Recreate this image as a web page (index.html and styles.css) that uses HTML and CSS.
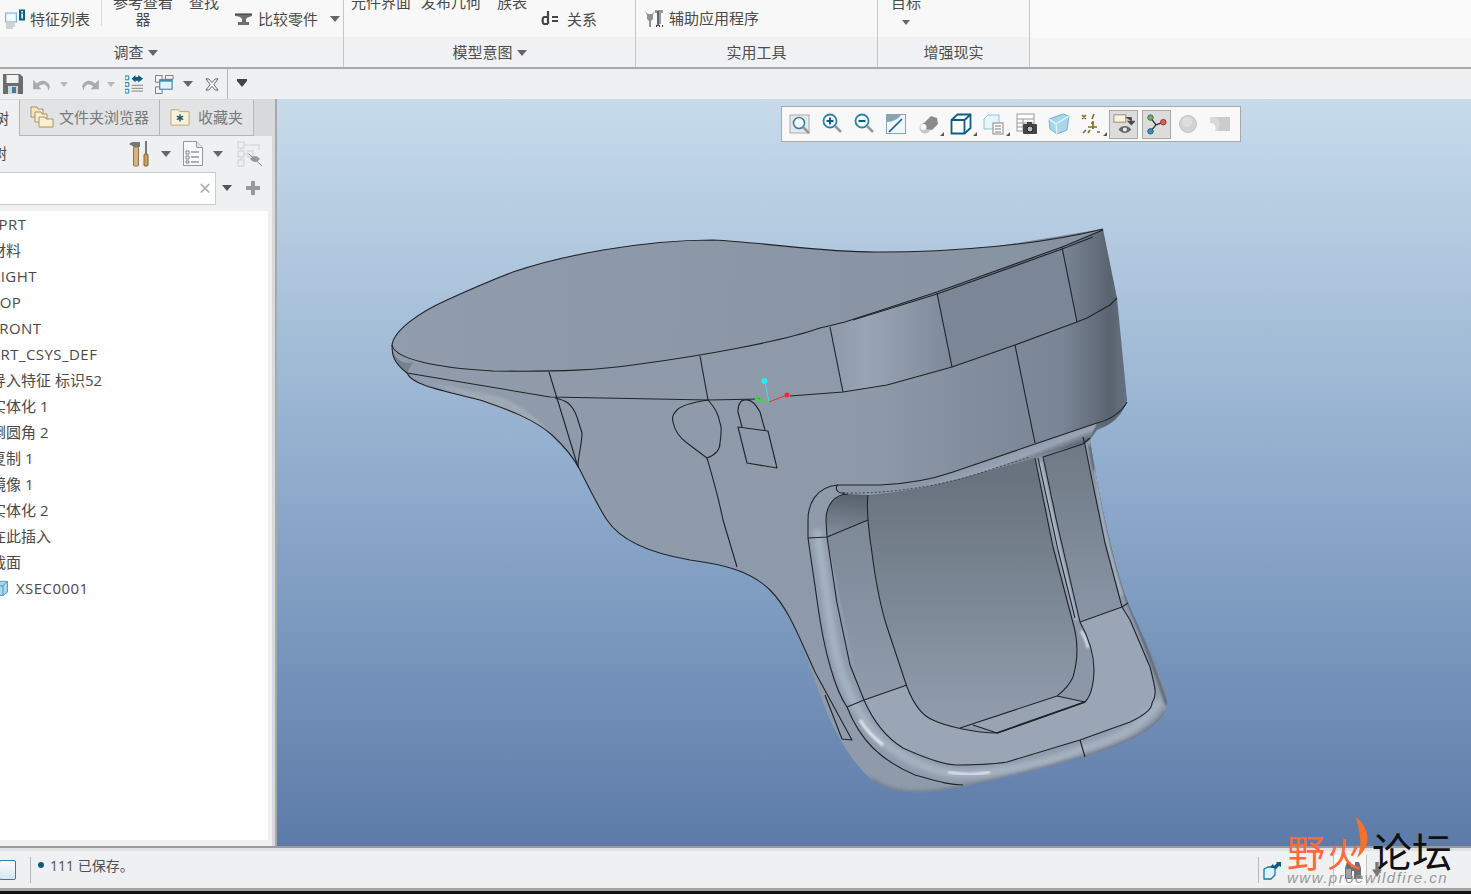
FILE: index.html
```html
<!DOCTYPE html>
<html lang="zh-CN">
<head>
<meta charset="utf-8">
<title>Creo Parametric</title>
<link rel="stylesheet" href="styles.css">
</head>
<body>
<div class="app">
  <header class="ribbon">
    <section class="group g1">
      <div class="tools">
        <span class="tool first">
          <svg class="ic20" viewBox="0 0 20 20"><rect x="0.5" y="4" width="11" height="9" fill="#d8eef8" stroke="#7fb6d2"/><rect x="2" y="5.5" width="8" height="6" fill="#f4fbff"/><rect x="14" y="0.5" width="6" height="11" fill="#0d5f85"/><rect x="16.3" y="2" width="1.6" height="1.6" fill="#fff"/><rect x="16.3" y="4.5" width="1.6" height="5" fill="#fff"/><path d="M1 15h9M1 17h9M1 19h7" stroke="#aaa"/></svg>
          <span>特征列表</span>
        </span>
        <i class="vsep"></i>
        <span class="tool stack s1">参考查看器</span>
        <span class="tool stack s2">查找</span>
        <span class="tool cmp">
          <svg class="ic18" viewBox="0 0 18 18"><path d="M0 4h17v2c-2 1-5 1-6 3v3h3v3H3v-3h4V9C6 7 3 6 0 6z" fill="#6e6e6e"/><path d="M0 4h17" stroke="#333"/></svg>
          <span>比较零件</span><b class="caret cmp-caret"></b>
        </span>
      </div>
      <div class="label">调查<b class="caret"></b></div>
    </section>
    <section class="group g2">
      <div class="tools">
        <span class="tool stack s3">元件界面</span>
        <span class="tool stack s4">发布几何</span>
        <span class="tool stack s5">族表</span>
        <span class="tool rel">
          <svg class="ic18" viewBox="0 0 18 18"><path d="M7 1v13M7 14H3.500C1 14 1 7 3.500 7H7" fill="none" stroke="#444" stroke-width="2.200"/><path d="M11 7h6M11 11h6" stroke="#444" stroke-width="2"/></svg>
          <span>关系</span>
        </span>
      </div>
      <div class="label">模型意图<b class="caret"></b></div>
    </section>
    <section class="group g3">
      <div class="tools">
        <span class="tool aux">
          <svg class="ic20" viewBox="0 0 20 20"><path d="M1 3l2 4v4l2 2v6h2v-6l2-2V7l2-4-3 3H4z" fill="#8c9396"/><path d="M11 2h8v3h-2v11h-3V5h-3z" fill="#9a9a9a"/><path d="M13 3h2v15h-2z" fill="#666"/><path d="M12 18h1M15 18h1M18 18h1" stroke="#333" stroke-width="2"/></svg>
          <span>辅助应用程序</span>
        </span>
      </div>
      <div class="label">实用工具</div>
    </section>
    <section class="group g4">
      <div class="tools">
        <span class="tool target">目标<b class="caret target-caret"></b></span>
      </div>
      <div class="label">增强现实</div>
    </section>
    <section class="group g5">
      <div class="tools"></div>
      <div class="label"></div>
    </section>
  </header>

  <nav class="quick">
    <svg class="q-save" viewBox="0 0 20 20"><path d="M0 0h17l3 3v17H0z" fill="#6c6c6c"/><rect x="3.500" y="1" width="12" height="8" fill="#f2f2f2"/><rect x="5" y="12" width="10" height="8" fill="#cfd5d8"/><rect x="9" y="13" width="4" height="6" fill="#3d7ea0"/></svg>
    <svg class="q-undo" viewBox="0 0 20 16"><path d="M4 7c4-5 12-4 14 3l-2 5c0-7-5-9-10-5l3 3H0V3z" fill="#a9acae"/></svg>
    <b class="caret light q-c1"></b>
    <svg class="q-redo" viewBox="0 0 20 16"><path d="M16 7C12 2 4 3 2 10l2 5c0-7 5-9 10-5l-3 3h9V3z" fill="#a9acae"/></svg>
    <b class="caret light q-c2"></b>
    <svg class="q-regen" viewBox="0 0 20 20"><path d="M0 1h4v4H0zM0 8h4v4H0zM0 15h4v4H0z" fill="#dff1fb" stroke="#1b7aa6"/><path d="M7 11h12M7 14h12M7 17h12" stroke="#999" stroke-width="1.300"/><path d="M7 4l4-4v2h3V0l5 4-5 4V6h-3v2z" fill="#0e5c82"/></svg>
    <svg class="q-win" viewBox="0 0 20 20"><path d="M0.500 0.500h7v7h-7zM0.500 12.500h7v7h-7zM11 0.500h8v4h-8z" fill="#f3f3f3" stroke="#777"/><rect x="5" y="5" width="13" height="10" fill="#e3f3fb" stroke="#3f89ac" stroke-width="1.200"/><rect x="5" y="5" width="13" height="2" fill="#3f89ac"/></svg>
    <b class="caret q-c3"></b>
    <svg class="q-close" viewBox="0 0 15 14"><path d="M1 1h3l3.500 4L11 1h3l-4.500 6L14 13h-3L7.500 9 4 13H1l4.500-6z" fill="#fafafa" stroke="#555"/></svg>
    <i class="q-sep"></i>
    <b class="caret over q-c4"></b>
  </nav>

  <main class="work">
    <aside class="panel">
      <div class="tabs">
        <div class="tab active"><span>模型树</span></div>
        <div class="tab files">
          <svg class="ic24" viewBox="0 0 24 24"><path d="M1 2h6l1 2h5v8H1z" fill="#f6e6bf" stroke="#a89468"/><path d="M5 7h6l1 2h5v8H5z" fill="#f9edcf" stroke="#a89468"/><path d="M9 12h6l1 2h7v8H9z" fill="#fbf0d2" stroke="#a89468"/></svg>
          <span>文件夹浏览器</span>
        </div>
        <div class="tab favs">
          <svg class="ic20f" viewBox="0 0 22 20"><path d="M1 2h8l2 2h10v15H1z" fill="#fbf1d6" stroke="#b9a370"/><path d="M11 7v8M7.500 9l7 4M14.500 9l-7 4" stroke="#0e5c82" stroke-width="1.600"/></svg>
          <span>收藏夹</span>
        </div>
      </div>
      <div class="side">
        <div class="tree-bar">
          <span class="tree-title">模型树</span>
          <svg class="tb-tools" viewBox="0 0 22 26"><path d="M0 3l3-2h8v5H5z" fill="#777"/><rect x="4.500" y="6" width="5" height="19" rx="1" fill="#d6b57a" stroke="#8c7443"/><rect x="16" y="0" width="2" height="13" fill="#777"/><rect x="15" y="13" width="4" height="12" rx="1" fill="#c9a25e" stroke="#7b6232"/></svg>
          <b class="caret tb-c1"></b>
          <svg class="tb-list" viewBox="0 0 20 25"><path d="M0.500 0.500h13l6 6v18H0.500z" fill="#f6f8f9" stroke="#8d9aa3"/><path d="M13.500 0.500v6h6" fill="#dfe5e8" stroke="#8d9aa3"/><path d="M3 10h3v3H3zM3 15h3v3H3zM3 20h3v2H3z" fill="#fff" stroke="#666" stroke-width=".8"/><path d="M8 11h8M8 16h8M8 21h8" stroke="#666" stroke-width="1.200"/></svg>
          <b class="caret tb-c2"></b>
          <svg class="tb-hide" viewBox="0 0 26 26"><path d="M1 1h6v6H1zM1 10h6v6H1zM1 19h6v6H1zM11 10h5v6h-5zM7 4h15v5M7 13h4M4 7v3M4 16v3" fill="none" stroke="#d8dadc" stroke-width="1.500"/><path d="M13 18c3-4 7-4 10 0-3 4-7 4-10 0z" fill="#9a9d9f"/><path d="M12 13l13 12" stroke="#888"/></svg>
        </div>
        <div class="search-row">
          <div class="search"><span class="x">×</span></div>
          <b class="caret sr-c"></b>
          <span class="plus"></span>
        </div>
        <ul class="tree">
          <li class="root latin">111.PRT</li>
          <li>材料</li>
          <li class="latin">RIGHT</li>
          <li class="latin">TOP</li>
          <li class="latin">FRONT</li>
          <li class="latin">PRT_CSYS_DEF</li>
          <li>导入特征 标识52</li>
          <li>实体化 1</li>
          <li>倒圆角 2</li>
          <li>复制 1</li>
          <li>镜像 1</li>
          <li>实体化 2</li>
          <li>在此插入</li>
          <li>截面</li>
          <li class="xsec">
            <svg class="cube" viewBox="0 0 18 18"><path d="M0 6l5-5h9v12l-5 4H0z" fill="#a9d9ee" stroke="#3f8fb3"/><path d="M0 6h9l5-5M9 6v11" fill="none" stroke="#3f8fb3"/></svg>
            <span class="latin">XSEC0001</span>
          </li>
        </ul>
      </div>
    </aside>

    <section class="canvas">
      <svg class="model" viewBox="277 99 1194 747" preserveAspectRatio="none">
        <defs>
          <linearGradient id="gBody" gradientUnits="userSpaceOnUse" x1="392" y1="0" x2="1128" y2="0"><stop offset="0" stop-color="#909cac"/><stop offset=".65" stop-color="#8e9aaa"/><stop offset=".826" stop-color="#7f8b9a"/><stop offset=".91" stop-color="#7a8695"/><stop offset=".955" stop-color="#656f7d"/><stop offset=".976" stop-color="#59636f"/><stop offset="1" stop-color="#687382"/></linearGradient>
          <linearGradient id="gTop" gradientUnits="userSpaceOnUse" x1="392" y1="260" x2="1103" y2="300"><stop offset="0" stop-color="#919dac"/><stop offset=".6" stop-color="#8a96a5"/><stop offset="1" stop-color="#8592a0"/></linearGradient>
          <linearGradient id="gBand1" gradientUnits="userSpaceOnUse" x1="830" y1="0" x2="950" y2="0"><stop offset="0" stop-color="#8e9aaa"/><stop offset=".3" stop-color="#99a5b5"/><stop offset=".7" stop-color="#8a96a5"/><stop offset="1" stop-color="#7e8a99"/></linearGradient>
          <linearGradient id="gBack" gradientUnits="userSpaceOnUse" x1="0" y1="480" x2="0" y2="730"><stop offset="0" stop-color="#69737f"/><stop offset="1" stop-color="#929eae"/></linearGradient>
          <linearGradient id="gWallR" gradientUnits="userSpaceOnUse" x1="0" y1="445" x2="0" y2="622"><stop offset="0" stop-color="#6f7985"/><stop offset="1" stop-color="#8a96a6"/></linearGradient>
          <linearGradient id="gWallL" gradientUnits="userSpaceOnUse" x1="0" y1="520" x2="0" y2="700"><stop offset="0" stop-color="#7d8997"/><stop offset="1" stop-color="#8f9bab"/></linearGradient>
          <linearGradient id="gCorner" gradientUnits="userSpaceOnUse" x1="850" y1="495" x2="845" y2="535"><stop offset="0" stop-color="#59626d"/><stop offset="1" stop-color="#7f8b99"/></linearGradient>
          <linearGradient id="gBrim" gradientUnits="userSpaceOnUse" x1="960" y1="468" x2="967" y2="486"><stop offset="0" stop-color="#8a96a5"/><stop offset=".6" stop-color="#99a5b5"/><stop offset="1" stop-color="#626c78"/></linearGradient>
          <filter id="soft" x="-20%" y="-20%" width="140%" height="140%"><feGaussianBlur stdDeviation="2.500"/></filter>
          <filter id="softer" x="-20%" y="-20%" width="140%" height="140%"><feGaussianBlur stdDeviation="1.200"/></filter>
          <clipPath id="clipS"><path d="M392 345C392 355 393 362 407 373C412 385 440 390 480 400C510 410 535 420 552 435C565 447 575 460 580 470C590 490 600 510 607 520C620 540 650 553 690 560C720 564 750 570 770 590C790 610 800 640 815 680C828 720 845 755 870 778C885 790 905 793 925 792C960 789 1020 775 1083 757C1120 745 1150 735 1165 712C1170 700 1165 690 1157 667C1145 640 1135 620 1127 600C1112 560 1098 490 1090 440L1097 430C1110 425 1122 418 1127 400L1117 298L1103 229Z"/></clipPath>
        </defs>

        <path fill="url(#gBody)" d="M392 345C392 355 393 362 407 373C412 385 440 390 480 400C510 410 535 420 552 435C565 447 575 460 580 470C590 490 600 510 607 520C620 540 650 553 690 560C720 564 750 570 770 590C790 610 800 640 815 680C828 720 845 755 870 778C885 790 905 793 925 792C960 789 1020 775 1083 757C1120 745 1150 735 1165 712C1170 700 1165 690 1157 667C1145 640 1135 620 1127 600C1112 560 1098 490 1090 440L1097 430C1110 425 1122 418 1127 400L1117 298L1103 229Z"/>
        <path fill="#8f9bab" d="M815 680C828 720 845 755 870 778C885 790 905 793 925 792C960 789 1020 775 1083 757C1120 745 1150 735 1165 712C1170 700 1165 690 1157 667C1145 640 1135 620 1127 600C1112 560 1098 490 1090 440L1083 445L1040 500L900 600Z"/>

        <path fill="url(#gBand1)" d="M830 327L937 293L952 367L887 385L843 392Z"/>
        <path fill="#7b8796" d="M937 293L1062 247L1077 322L1015 345L952 367Z"/>
        <path fill="url(#gTop)" d="M392 345C394 330 420 312 447 300C480 285 500 277 513 272C560 256 640 240 713 240C770 243 830 253 880 252C950 252 1040 245 1103 229L1062 247L937 292L830 327C780 342 700 356 640 364C600 370 560 372 493 371C440 368 395 360 392 345Z"/>

        <path fill="#76818f" d="M393 350C395 360 405 365 413 362L407 373C397 367 393 360 393 350Z"/>
        <path fill="#a4adb9" opacity=".8" filter="url(#softer)" d="M432 383L500 397C520 405 535 415 552 435L540 426C505 410 470 398 432 383Z"/>

        <path fill="#8f9bab" d="M808 520C808 505 815 490 838 485L890 485L868 495L848 600L907 687L864 700L848 707L818 607Z"/>
        <path fill="url(#gBrim)" d="M837 485C860 487 905 488 953 472L1035 444L1097 423L1090 438L1083 444L1030 457L980 473C920 490 880 494 843 493Z"/>
        <path fill="url(#gBack)" d="M868 495C920 490 950 482 980 473L1035 458L1053 547L1073 623C1078 640 1078 660 1073 677C1068 688 1062 692 1057 696L960 728C945 726 940 722 933 720C920 715 912 700 907 687L887 627C880 605 876 585 872 553C870 540 866 510 868 495Z"/>
        <path fill="url(#gWallR)" d="M1043 457L1085 445L1105 543L1122 607L1080 622L1057 523Z"/>
        <path fill="#8c98a8" d="M1035 458L1043 457L1057 523L1080 622C1090 640 1094 655 1094 670C1094 680 1092 695 1085 702L1057 696C1062 692 1068 688 1073 677C1078 660 1078 640 1073 623L1053 547Z"/>
        <path fill="url(#gWallL)" d="M827 537L868 520L872 553C876 585 880 605 887 627L907 685L864 700L850 645Z"/>
        <path fill="url(#gCorner)" d="M826 520C827 505 835 495 848 494L868 495L867 507L868 520L827 537Z"/>
        <path fill="#9aa6b6" d="M864 700L907 686C912 700 920 715 933 720C945 726 975 733 997 733L1085 702C1092 695 1094 680 1094 670C1094 655 1090 640 1080 622L1122 607L1130 620L1150 667C1156 690 1157 695 1152 703C1152 708 1145 715 1130 722L1080 740L1007 762C990 765 975 765 957 765C945 765 925 758 903 748C890 740 875 725 864 700Z"/>
        <path fill="#98a4b4" d="M973 725L1057 696L1085 702L997 733Z"/>

        <g clip-path="url(#clipS)">
          <path fill="none" stroke="#a6b2c2" stroke-width="9" filter="url(#soft)" d="M817 530L833 640C840 680 858 718 883 742C908 762 932 772 960 774C1000 774 1050 762 1083 749C1120 738 1145 725 1160 700"/>
          <path fill="none" stroke="#556070" stroke-width="4" filter="url(#soft)" d="M870 780C885 792 905 795 925 794C960 791 1020 777 1083 759C1120 747 1150 737 1167 712"/>
          <path fill="none" stroke="#5a6572" stroke-width="3" filter="url(#softer)" d="M1090 445C1097 490 1112 560 1128 602C1140 630 1155 670 1167 705"/>
          <path fill="none" stroke="#f1f5fa" stroke-width="3" opacity=".85" filter="url(#softer)" d="M860 720C866 730 874 738 883 745"/>
          <path fill="none" stroke="#f1f5fa" stroke-width="2.500" opacity=".85" filter="url(#softer)" d="M948 772C962 775 978 775 990 772"/>
          <path fill="none" stroke="#f1f5fa" stroke-width="2.500" opacity=".85" filter="url(#softer)" d="M1081 631C1085 637 1087 642 1088 648"/>
          <path fill="none" stroke="#b3bfce" stroke-width="3" filter="url(#softer)" d="M1040 462L1058 545L1076 620"/>
          <path fill="none" stroke="#a8b4c3" stroke-width="3" filter="url(#softer)" d="M1095 470C1100 510 1108 550 1122 596"/>
        </g>

        <g class="edges">
          <path d="M392 345C394 330 420 312 447 300C480 285 500 277 513 272C560 256 640 240 713 240C770 243 830 253 880 252C950 252 1040 245 1103 229"/>
          <path d="M392 345C395 360 440 368 493 371C560 372 600 370 640 364C700 356 780 342 820 328L845 322L937 292L1062 247L1103 230"/>
          <path d="M853 320L937 294L1062 249L1093 237"/>
          <path d="M392 345C392 355 393 362 407 373C412 385 440 390 480 400C510 410 535 420 552 435C565 447 575 460 580 470C590 490 600 510 607 520C620 540 650 553 690 560C720 564 750 570 770 590C790 610 800 640 815 672"/>
          <path d="M407 373L550 397L708 400L760 399M790 396L843 392L887 385L952 367L1015 345L1077 322L1087 318L1110 305L1117 298"/>
          <path d="M549 372L578 467M700 356L708 400M830 327L843 392M937 293L952 367M1062 247L1077 322M1015 345L1035 443"/>
          <path d="M555 398C565 400 572 403 577 417L582 433C582 445 578 455 578 467"/>
          <path d="M708 400C695 402 682 405 677 410C672 415 672 418 673 422C675 432 680 438 687 443L707 458C715 455 720 450 720 443C722 430 721 425 720 423C718 412 714 407 708 400Z"/>
          <path d="M707 458C712 475 718 495 723 520L737 567"/>
          <path d="M742 427L738 412C738 405 740 400 745 400C752 399 756 405 760 412L765 430"/>
          <path d="M738 427L768 431L777 468L747 463Z"/>
          <path d="M837 485L880 485C905 484 930 480 953 472L1035 444L1097 423C1110 420 1122 412 1127 402"/>
          <path d="M843 493C870 494 930 490 980 473L1030 457" stroke-dasharray="2 2" opacity=".6"/>
          <path d="M1043 457L1083 444L1090 438M1083 437L1085 445"/>
          <path d="M837 485C835 490 838 494 845 493"/>
          <path d="M838 485C815 487 808 505 808 520L808 538L818 607C824 650 835 690 847 707C860 740 880 760 915 775C940 782 950 785 963 785"/>
          <path d="M848 494C835 494 826 505 826 520L827 537L837 603L850 665L864 700C875 725 890 740 903 748C925 758 945 765 957 765C975 765 990 765 1007 762L1080 740L1130 722C1145 715 1152 708 1152 703C1157 695 1156 690 1150 667L1130 620L1122 607L1105 543L1090 470L1085 445"/>
          <path d="M868 495C866 510 870 540 872 553C876 585 880 605 887 627L907 687C912 700 920 715 933 720C945 726 975 733 997 733L1085 702C1092 695 1094 680 1094 670C1094 655 1090 640 1080 622L1057 523L1043 457"/>
          <path d="M1035 458L1053 547L1073 623C1078 640 1078 660 1073 677C1068 688 1062 692 1057 696L960 728"/>
          <path d="M1038 458L1058 550L1075 618"/>
          <path d="M1122 607L1080 622M1128 603L1122 607"/>
          <path d="M907 685L864 700L847 707"/>
          <path d="M868 520L827 537L808 538"/>
          <path d="M1080 740L1085 757"/>
          <path d="M1057 696L1085 702M973 725L997 733"/>
          <path d="M815 672L852 740L842 739L825 695"/>
          <path class="thick" d="M997 733L1085 702"/>
        </g>

        <path d="M769 402L765 382" stroke="#2ee6ee" fill="none"/>
        <path d="M769 402L757 399" stroke="#2fe02f" fill="none"/>
        <path d="M769 402L787 395" stroke="#f02a2a" fill="none"/>
        <circle cx="764.500" cy="381" r="3" fill="#25eef2"/>
        <circle cx="757" cy="399" r="2.200" fill="#25e52a"/>
        <circle cx="787" cy="395" r="2.500" fill="#f52a2a"/>
      </svg>

      <div class="viewbar">
        <svg class="vi" viewBox="0 0 22 22"><rect x="1" y="2" width="19" height="18" fill="#e9e9e9" stroke="#aaa"/><circle cx="10" cy="10" r="5.500" fill="#fff" stroke="#2c86ae" stroke-width="1.600"/><path d="M14 14l6 6" stroke="#999" stroke-width="2.500"/></svg>
        <svg class="vi" viewBox="0 0 22 22"><circle cx="9" cy="8" r="6.500" fill="#fff" stroke="#2a82ab" stroke-width="1.800"/><path d="M9 4.500v7M5.500 8h7" stroke="#0e5c82" stroke-width="2"/><path d="M14 13l6 6" stroke="#999" stroke-width="2.500"/></svg>
        <svg class="vi" viewBox="0 0 22 22"><circle cx="9" cy="8" r="6.500" fill="#fff" stroke="#2a82ab" stroke-width="1.800"/><path d="M5.500 8h7" stroke="#0e5c82" stroke-width="2"/><path d="M14 13l6 6" stroke="#999" stroke-width="2.500"/></svg>
        <svg class="vi" viewBox="0 0 22 22"><rect x="1" y="1" width="20" height="20" fill="#8aa5b1"/><path d="M2 20V9c6 0 11-3 14-7h4v18z" fill="#eef6fa"/><path d="M4 19L17 6" stroke="#0e5c82" stroke-width="1.600"/></svg>
        <span class="vi more"><svg viewBox="0 0 22 22"><circle cx="8" cy="15" r="5.500" fill="#c8c8c8"/><path d="M6 11l8-8 6 2 1 6-6 6-6-1z" fill="#8a8a8a"/><circle cx="6.500" cy="14" r="3" fill="#f8f8f8"/></svg></span>
        <span class="vi more"><svg viewBox="0 0 22 22"><path d="M1.500 7l6-5.500h13V15l-6 5.500H1.500z" fill="#fff" stroke="#0e5c82" stroke-width="1.800"/><path d="M1.500 7h13v13.500M14.500 7l6-5.500" fill="none" stroke="#0e5c82" stroke-width="1.800"/></svg></span>
        <span class="vi more"><svg viewBox="0 0 22 22"><path d="M1 6l4-4h11v14H1z" fill="#e6f4fb" stroke="#8cc6df"/><rect x="10" y="10" width="10" height="11" fill="#fff" stroke="#888"/><path d="M12 13h6M12 16h6M12 19h6" stroke="#777"/></svg></span>
        <svg class="vi" viewBox="0 0 22 22"><rect x="1" y="1" width="17" height="17" fill="#fff" stroke="#999"/><path d="M1 6h17M1 10h17M1 14h17M7 6v12" stroke="#999"/><rect x="7" y="11" width="14" height="10" rx="1" fill="#444"/><rect x="11" y="9" width="5" height="3" fill="#444"/><circle cx="14" cy="16" r="3" fill="#bbb" stroke="#222"/></svg>
        <svg class="vi" viewBox="0 0 22 22"><path d="M1 6l14-5 6 2-2 14-10 4-7-5z" fill="#a8d6ea" stroke="#6fb2cf"/><path d="M1 6l7 5 13-8M8 11l1 10" fill="none" stroke="#e8f6fc" stroke-width="1.200"/></svg>
        <span class="vi more"><svg viewBox="0 0 22 22"><path d="M2 2l4 4M6 2L2 6M14 1l-2 5M11 10h2M13 8v8M8 14h9M3 20l3-3M8 20l2-3M17 19h3" stroke="#8a6b2c" stroke-width="1.700" fill="none"/></svg></span>
        <span class="vi pressed"><svg viewBox="0 0 24 24"><rect x="1" y="2" width="13" height="8" fill="#fcf3d3" stroke="#888"/><path d="M14 5h6v4M16 9h8l-4 4z" fill="#444" stroke="#444"/><path d="M6 18c4-5 10-5 14 0-4 5-10 5-14 0z" fill="#666"/><circle cx="13" cy="18" r="2.200" fill="#eee"/></svg></span>
        <span class="vi pressed"><svg viewBox="0 0 24 24"><path d="M6 5l6 8 8-3M12 13l-6 7" stroke="#333" fill="none" stroke-width="1.500"/><circle cx="6" cy="5" r="3" fill="#6fae6a" stroke="#3c6e3a"/><circle cx="20" cy="10" r="3" fill="#d9605e" stroke="#8f2e2c"/><circle cx="6" cy="20" r="3" fill="#3b8fb8" stroke="#1c5f80"/></svg></span>
        <svg class="vi" viewBox="0 0 22 22"><circle cx="11" cy="11" r="8.500" fill="#d2d2d2" stroke="#c4c4c4"/><circle cx="10" cy="9" r="5" fill="#dedede"/></svg>
        <svg class="vi" viewBox="0 0 22 22"><path d="M1 4h20v14H6c2-5-1-8-5-8z" fill="#d9d9d9"/><path d="M1 4h6c4 2 5 8 2 14h12V4z" fill="#cbcbcb"/></svg>
      </div>
    </section>
  </main>

  <footer class="status">
    <span class="st-btn"></span>
    <i class="st-sep"></i>
    <i class="st-dot"></i>
    <span class="st-msg">111 已保存。</span>
    <div class="st-right">
      <i class="st-sep"></i>
      <svg class="st-sync" viewBox="0 0 20 20"><path d="M1 9l4-2h7v8l-4 4H1z" fill="#dff1fb" stroke="#1b7aa6" stroke-width="1.300"/><path d="M7 7l3-3 1 2 3-3-1-1h5v5l-2-1-3 3" fill="#0e5c82"/></svg>
      <span class="st-find">
        <svg class="st-bino" viewBox="0 0 20 20"><path d="M2 8l2-6h4v5h4V2h4l2 6v11h-7V11H9v8H2z" fill="#6d6f71"/><path d="M3 9h5v9H3z" fill="#a2a4a6"/></svg>
      </span>
      <span class="st-filter">
        <svg class="st-arrow" viewBox="0 0 12 18"><path d="M4 0h4v9h4l-6 9-6-9h4z" fill="#777"/></svg>
      </span>
    </div>
    <div class="watermark">
      <svg class="flame" viewBox="0 0 20 52"><path d="M3 0c9 8 16 18 15 30-1 10-7 17-13 22 3-8 5-14 4-24C8 18 6 9 3 0z" fill="#f4722b"/></svg>
      <span class="wm-a">野</span><span class="wm-b">火</span><span class="wm-c">论坛</span>
      <span class="wm-url">www.proewildfire.cn</span>
    </div>
  </footer>
  <div class="bottom"></div>
</div>
</body>
</html>
```
FILE: styles.css
```css
* { box-sizing: border-box; }
html, body { margin: 0; padding: 0; width: 1471px; height: 894px; overflow: hidden; }
body { font-family: "Open Sans", "Noto Sans CJK SC", sans-serif; font-size: 15px; color: #4a4a4a; background: #eff0f2; }
svg { display: block; flex: none; }
.app { display: flex; flex-direction: column; width: 1471px; height: 894px; overflow: hidden; }

/* ribbon */
.ribbon { display: flex; height: 69px; flex: none; border-bottom: 2px solid #a9a9a9; background: #f8f8f8; }
.group { display: flex; flex-direction: column; flex: none; border-right: 1px solid #c6c6c6; }
.g1 { width: 344px; }
.g2 { width: 292px; }
.g3 { width: 242px; }
.g4 { width: 152px; }
.g5 { flex: 1; border-right: 0; }
.tools { height: 38px; display: flex; overflow: hidden; background: #f8f8f8; }
.g5 .tools { background: #fafafa; }
.label { flex: 1; background: #f0f1f3; display: flex; align-items: center; justify-content: center; gap: 4px; line-height: 29px; font-size: 15px; color: #4d4d4d; padding-top: 1px; }
.g1 .label { padding-right: 72px; }
.g5 .label { background: #f5f5f6; }
.caret { display: inline-block; width: 0; height: 0; border-left: 5px solid transparent; border-right: 5px solid transparent; border-top: 6px solid #666; flex: none; }
.caret.light { border-top-color: #b5b7b9; border-left-width: 4px; border-right-width: 4px; border-top-width: 5px; }
.caret.over { box-shadow: 0 -2px 0 #444; }

.tool { display: flex; align-items: center; flex: none; line-height: 17px; }
.stack { display: block; width: 62px; margin-top: -6px; height: 40px; text-align: center; }
.first { gap: 5px; margin-left: 5px; height: 38px; }
.ic20 { width: 20px; height: 20px; }
.ic18 { width: 18px; height: 18px; }
.vsep { display: block; width: 1px; height: 26px; margin: 0 0 0 11px; background: #d8d8d8; flex: none; }
.s1 { margin-left: 10px; }
.s2 { margin-left: 14px; width: 32px; }
.cmp { gap: 5px; margin-left: 15px; height: 38px; }
.cmp-caret { margin-left: 7px; margin-top: -1px; }
.s3 { margin-left: 6px; }
.s4 { margin-left: 8px; }
.s5 { margin-left: 14px; width: 32px; }
.rel { gap: 8px; margin-left: 13px; height: 38px; }
.aux { gap: 5px; margin-left: 8px; height: 38px; padding-bottom: 2px; }
.target { display: flex; flex-direction: column; align-items: center; width: 32px; margin: -6px 0 0 12px; height: 40px; gap: 9px; }
.target-caret { border-left-width: 4px; border-right-width: 4px; border-top-width: 5px; }

/* quick access */
.quick { height: 30px; flex: none; display: flex; align-items: center; background: #eff0f2; }
.q-save { width: 20px; height: 20px; margin-left: 3px; }
.q-undo { width: 19px; height: 15px; margin-left: 10px; }
.q-c1 { margin-left: 8px; }
.q-redo { width: 19px; height: 15px; margin-left: 12px; }
.q-c2 { margin-left: 8px; }
.q-regen { width: 19px; height: 19px; margin-left: 10px; }
.q-win { width: 19px; height: 19px; margin-left: 11px; }
.q-c3 { margin-left: 9px; }
.q-close { width: 14px; height: 13px; margin-left: 12px; }
.q-sep { display: block; width: 1px; height: 30px; background: #b5b5b5; margin-left: 8px; }
.q-c4 { margin-left: 9px; border-top-color: #444; }

/* main */
.work { flex: none; height: 747px; display: flex; }
.panel { width: 277px; flex: none; display: flex; flex-direction: column; background: #d7d9dc; border-right: 2px solid #a8a8a8; padding-top: 1px; overflow: hidden; }
.tabs { height: 36px; flex: none; display: flex; }
.tab { display: flex; align-items: center; color: #77797b; height: 36px; padding-bottom: 2px; border: 1px solid #b4b7b9; border-left: 0; border-top: 0; background: #e1e3e5; }
.active { width: 20px; background: #eff0f2; border-bottom: 0; justify-content: flex-end; padding-right: 10px; color: #4a4a4a; }
.active span { flex: none; }
.files { width: 140px; padding-left: 10px; gap: 5px; }
.favs { width: 94px; padding-left: 10px; gap: 8px; }
.ic24 { width: 24px; height: 24px; }
.ic20f { width: 20px; height: 18px; }
.side { flex: 1; background: #eff0f2; display: flex; flex-direction: column; padding-right: 4px; margin-right: 3px; }
.tree-bar { height: 35px; flex: none; display: flex; align-items: center; }
.tree-title { flex: none; margin: -3px 0 0 -38px; width: 167px; color: #4a4a4a; }
.tb-tools { width: 22px; height: 26px; }
.tb-c1 { margin-left: 10px; }
.tb-list { width: 20px; height: 25px; margin-left: 12px; }
.tb-c2 { margin-left: 10px; }
.tb-hide { width: 26px; height: 26px; margin-left: 14px; }
.search-row { height: 34px; flex: none; display: flex; align-items: center; }
.search { width: 216px; height: 33px; background: #fff; border: 1px solid #c9cbcd; border-left: 0; display: flex; align-items: center; justify-content: flex-end; padding-right: 4px; }
.x { color: #a8a8a8; font-size: 21px; line-height: 1; }
.sr-c { margin-left: 6px; border-top-color: #555; }
.plus { position: relative; width: 14px; height: 14px; margin-left: 14px; background: linear-gradient(#999,#999) center/100% 4px no-repeat, linear-gradient(#999,#999) center/4px 100% no-repeat; }
.tree { list-style: none; margin: 6px 0 6px; padding: 0; flex: 1; width: 268px; background: #fff; overflow: hidden; }
.tree li { height: 26px; line-height: 26px; margin-left: -9px; white-space: nowrap; color: #4a4a4a; }
.tree .root { margin-left: -33px; }
.tree .xsec { display: flex; align-items: center; gap: 5px; margin-left: -5px; }
.latin { letter-spacing: .45px; }
.cube { width: 16px; height: 17px; }

/* canvas */
.canvas { flex: 1; position: relative; background: linear-gradient(#c7dbeb 0%, #8ba8ca 55%, #5d7ba8 100%); }
.model { display: block; width: 100%; height: 100%; }
.edges path { fill: none; stroke: #1f2329; stroke-width: 1.100; stroke-linejoin: round; }
.edges .thick { stroke-width: 1.800; }
.viewbar { position: absolute; left: 504px; top: 7px; width: 460px; height: 36px; background: #f8f8f8; border: 1px solid #a9a9a9; display: grid; grid-template-columns: repeat(5, 32px) 33px 34px repeat(3, 32px) 33px repeat(3, 32px); padding-left: 2px; align-items: center; }
.vi { position: relative; width: 22px; height: 22px; justify-self: center; }
.vi svg { width: 22px; height: 22px; }
.more::after { content: ""; position: absolute; right: -5px; bottom: -1px; border-left: 4px solid transparent; border-bottom: 4px solid #555; }
.pressed { width: 29px; height: 29px; background: #dcdcdc; border: 1px solid #a9a9a9; display: flex; align-items: center; justify-content: center; }

/* status */
.status { height: 42px; flex: none; position: relative; display: flex; align-items: center; background: #eff0f2; border-top: 2px solid #9b9b9b; box-shadow: inset 0 3px 0 #dfe1e3; padding-top: 3px; }
.st-btn { width: 17px; height: 20px; margin-left: -1px; border: 1px solid #2f7ea3; border-radius: 2px; background: linear-gradient(#fafcfd, #d5e6ef); }
.st-sep { display: block; width: 1px; height: 26px; background: #b5b7b9; flex: none; }
.status > .st-sep { margin-left: 14px; }
.st-dot { display: block; width: 6px; height: 6px; border-radius: 50%; background: #0e5c82; margin: -10px 0 0 7px; flex: none; }
.st-msg { margin-left: 6px; font-size: 14px; color: #4f4f55; margin-top: -10px; }
.st-right { margin-left: auto; display: flex; align-items: center; height: 30px; width: 213px; }
.st-sync { width: 20px; height: 20px; margin-left: 4px; }
.st-find { display: flex; align-items: center; justify-content: center; width: 34px; height: 30px; margin-left: 50px; padding-left: 5px; background: #f8f8f8; border-left: 1px solid #c2c2c2; border-right: 1px solid #c2c2c2; }
.st-bino { width: 20px; height: 20px; }
.st-filter { display: flex; justify-content: center; width: 20px; }
.st-arrow { width: 10px; height: 15px; }
.watermark { position: absolute; left: 1287px; top: -36px; width: 184px; height: 78px; line-height: 1; }
.flame { position: absolute; left: 66px; top: 0; width: 16px; height: 50px; }
.wm-a, .wm-b, .wm-c { position: absolute; top: 20px; font-family: "Noto Sans CJK SC", sans-serif; }
.wm-a { left: 0; font-size: 38px; color: #fb6a3a; }
.wm-b { left: 40px; font-size: 34px; top: 24px; color: #fb6a3a; }
.wm-c { left: 85px; font-size: 40px; top: 18px; color: #111; }
.wm-url { position: absolute; left: 0; top: 58px; width: 162px; font-family: "Liberation Sans", sans-serif; font-style: italic; font-size: 15px; letter-spacing: 1.500px; color: #999; white-space: nowrap; }
.bottom { flex: 1; background: #111; border-top: 3px solid #a3a3a3; }
```
